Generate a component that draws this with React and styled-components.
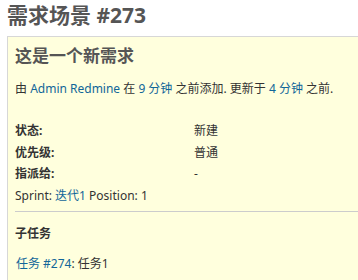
import React from 'react';
import styled, { createGlobalStyle } from 'styled-components';

const Global = createGlobalStyle`
  html, body {
    margin: 0;
    padding: 0;
    overflow: hidden;
    background: #ffffff;
  }
  body {
    font-family: "Noto Sans", "Noto Sans CJK SC", sans-serif;
    font-size: 12px;
    color: #333;
  }
`;

const Page = styled.div`
  width: 440px;
  padding: 0 0 0 7px;
`;

const Title = styled.h2`
  margin: 0;
  padding-top: 3px;
  width: fit-content;
  font-size: 21px;
  line-height: 24px;
  font-weight: bold;
  color: #555;
`;

const Issue = styled.div`
  margin-top: 9px;
  background: #ffffdd;
  border: 1px solid #d7d7d7;
  padding: 6px 7px;
`;

const Subject = styled.h3`
  margin: 0;
  font-size: 17px;
  line-height: 26px;
  font-weight: bold;
  color: #555;
`;

const Author = styled.p`
  margin: 10px 0 0;
  line-height: 20px;
`;

const Link = styled.a`
  color: #116699;
  text-decoration: none;
`;

const Attributes = styled.div`
  margin-top: 21px;
`;

const Row = styled.div`
  display: flex;
  height: 21.5px;
  line-height: 21.5px;
`;

const Label = styled.div`
  width: 179px;
  font-weight: bold;
`;

const Value = styled.div``;

const Rule = styled.hr`
  border: none;
  border-top: 1px solid #cccccc;
  margin: ${p => p.$top}px 0 0;
`;

const Section = styled.div`
  margin-top: 12px;
  line-height: 20px;
  font-weight: bold;
`;

const SubTask = styled.div`
  margin-top: 10px;
  line-height: 20px;
  padding-left: 1px;
`;

export default function App() {
  return (
    <>
      <Global />
      <Page>
        <Title>需求场景 #273</Title>
        <Issue>
          <Subject>这是一个新需求</Subject>
          <Author>
            由 <Link href="#">Admin Redmine</Link> 在 <Link href="#">9 分钟</Link> 之前添加. 更新于{' '}
            <Link href="#">4 分钟</Link> 之前.
          </Author>
          <Attributes>
            <Row>
              <Label>状态:</Label>
              <Value>新建</Value>
            </Row>
            <Row>
              <Label>优先级:</Label>
              <Value>普通</Value>
            </Row>
            <Row>
              <Label>指派给:</Label>
              <Value>-</Value>
            </Row>
            <Row>
              Sprint:&nbsp;<Link href="#">迭代1</Link>&nbsp;Position: 1
            </Row>
          </Attributes>
          <Rule $top={5} />
          <Section>子任务</Section>
          <SubTask>
            <Link href="#">任务 #274</Link>: 任务1
          </SubTask>
          <Rule $top={6} />
        </Issue>
      </Page>
    </>
  );
}
